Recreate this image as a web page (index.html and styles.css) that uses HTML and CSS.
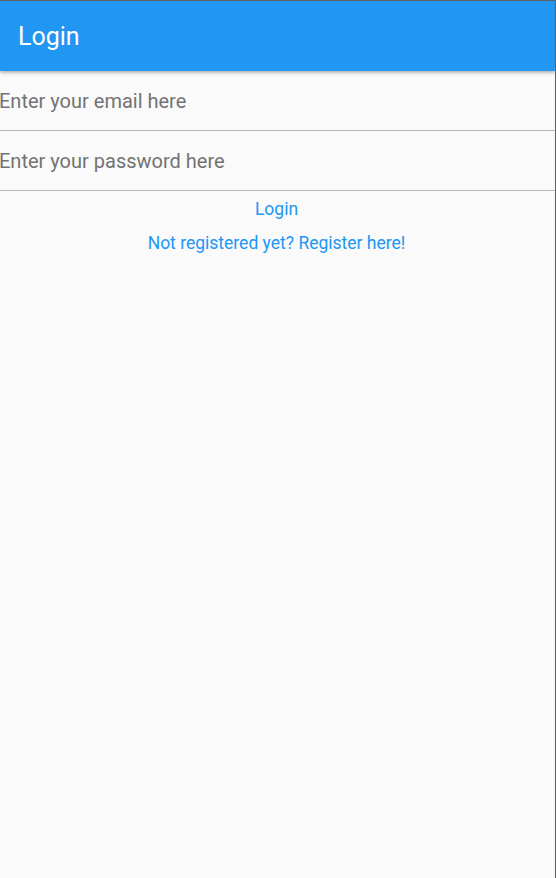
FILE: index.html
```html
<!DOCTYPE html>
<html>
<head>
<meta charset="utf-8">
<link rel="stylesheet" href="styles.css">
</head>
<body>
<div class="frame">
  <header class="appbar"><h1 class="title">Login</h1></header>
  <main class="content">
    <div class="field"><span class="placeholder">Enter your email here</span></div>
    <div class="field"><span class="placeholder">Enter your password here</span></div>
    <div class="links">
      <a class="link link-login">Login</a>
      <a class="link link-register">Not registered yet? Register here!</a>
    </div>
  </main>
</div>
</body>
</html>
```
FILE: styles.css
```css
html, body {
  margin: 0;
  padding: 0;
  height: 100%;
}
body {
  font-family: Roboto, "Liberation Sans", sans-serif;
  background: #fafafa;
}
.frame {
  box-sizing: border-box;
  height: 878px;
  border-top: 1px solid #5f5f5f;
  border-right: 1px solid #5f5f5f;
  background: #fafafa;
  display: flex;
  flex-direction: column;
  overflow: hidden;
}
.appbar {
  height: 70px;
  background: #2196f3;
  display: flex;
  align-items: center;
  padding-left: 18px;
  box-shadow: 0 2px 4px rgba(0,0,0,0.22), 0 1px 2px rgba(0,0,0,0.12);
  position: relative;
  z-index: 1;
  flex-shrink: 0;
}
.title {
  margin: 0;
  font-weight: 400;
  font-size: 25px;
  color: #ffffff;
  line-height: 1;
}
.content {
  display: flex;
  flex-direction: column;
}
.field {
  height: 60px;
  box-sizing: border-box;
  border-bottom: 1px solid #b8b8b8;
  display: flex;
  align-items: center;
}
.placeholder {
  font-size: 20px;
  color: #737373;
  margin-left: -1px;
}
.links {
  display: flex;
  flex-direction: column;
  align-items: center;
  padding-top: 8px;
  padding-right: 2px;
  gap: 14px;
}
.link {
  color: #2196f3;
  font-size: 17.5px;
  line-height: 20px;
  cursor: pointer;
}
```
